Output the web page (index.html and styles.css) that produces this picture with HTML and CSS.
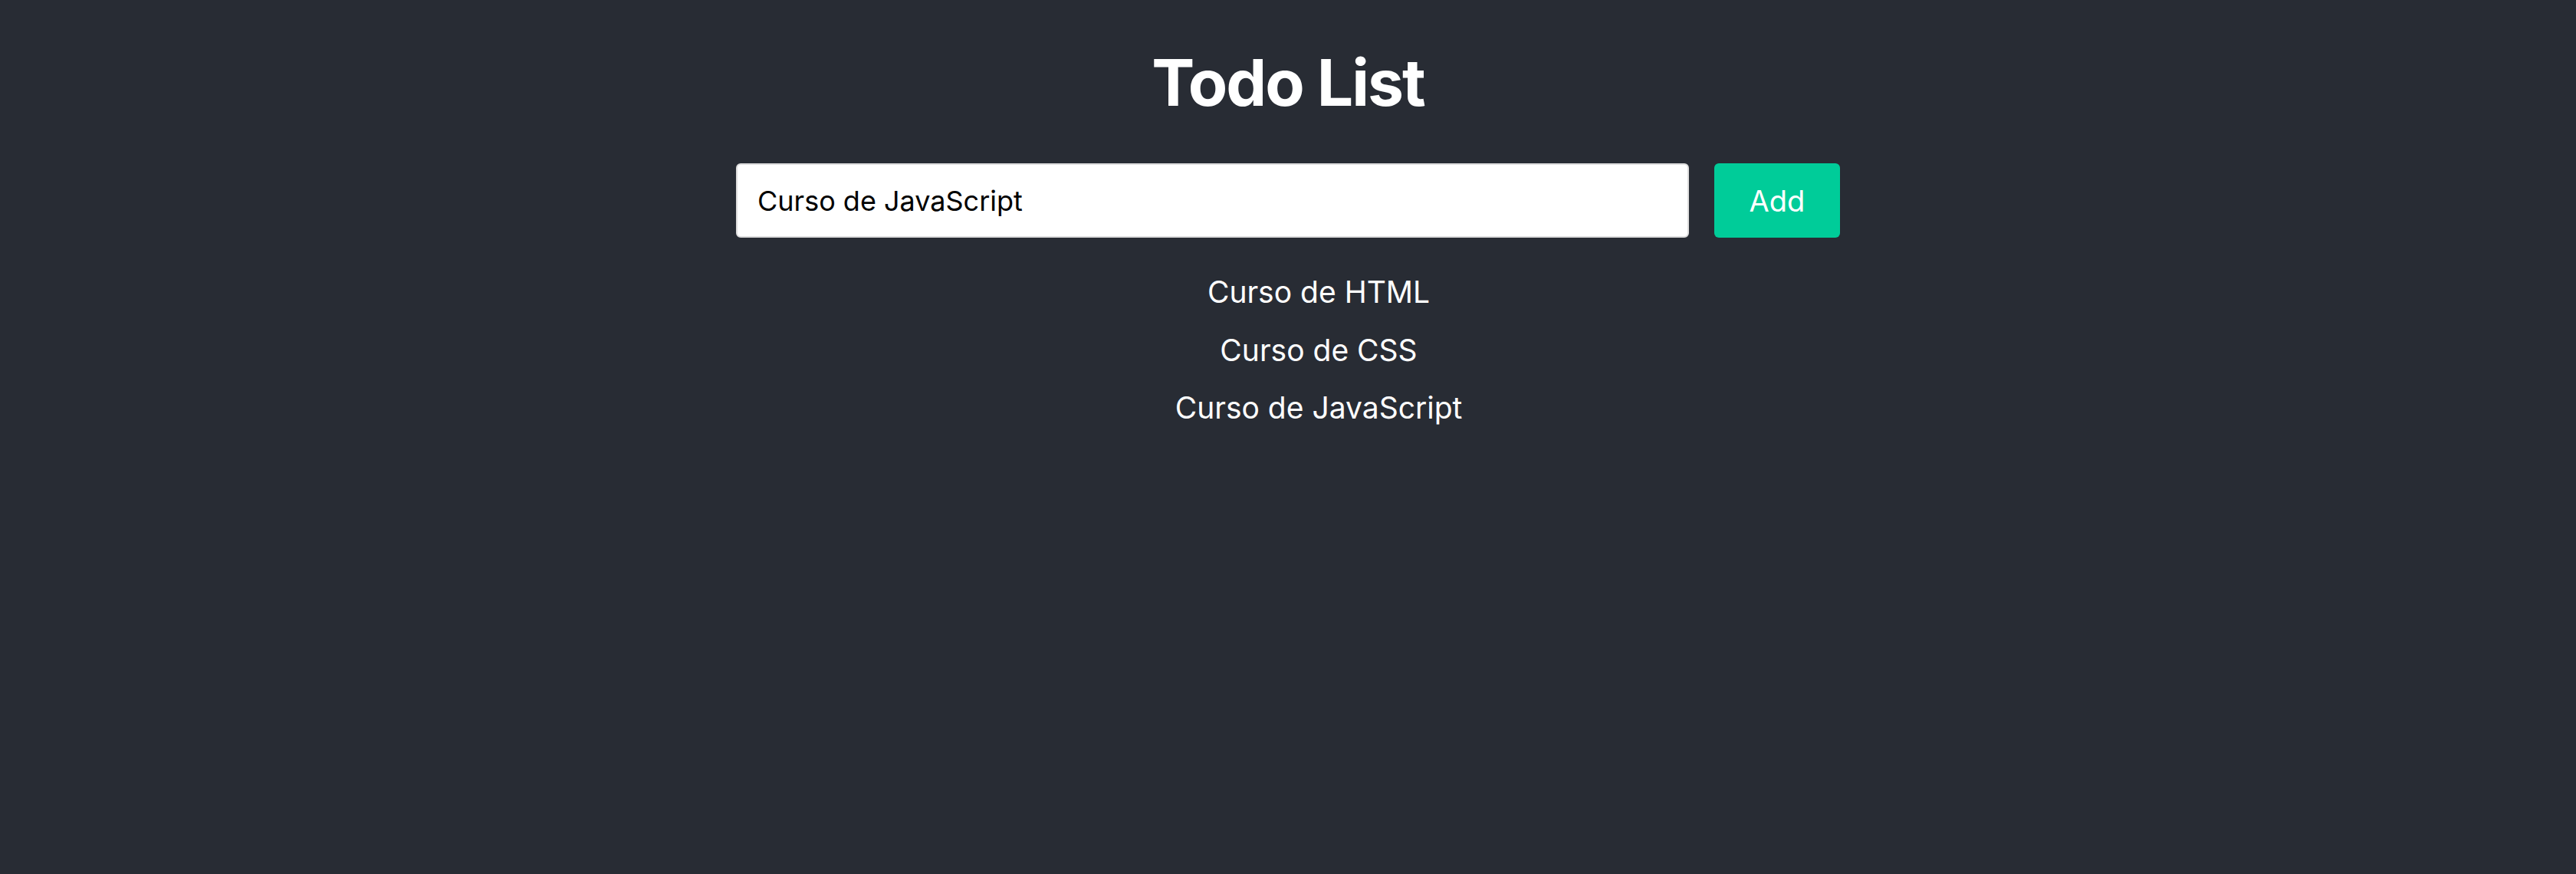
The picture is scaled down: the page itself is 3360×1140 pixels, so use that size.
FILE: index.html
```html
<!DOCTYPE html>
<html lang="pt-br">
  <head>
    <meta charset="utf-8">
    <meta name="viewport" content="width=device-width">
    <title>Todo List</title>
    <link rel="stylesheet" href="styles.css">
  </head>
  <body>
    <div class="app">
      <h1 class="title">Todo List</h1>
      <form class="todo-form">
        <input class="todo-input" type="text" value="Curso de JavaScript">
        <button class="todo-add" type="button">Add</button>
      </form>
      <ul class="todo-list">
        <li class="todo-item">Curso de HTML</li>
        <li class="todo-item">Curso de CSS</li>
        <li class="todo-item">Curso de JavaScript</li>
      </ul>
    </div>
  </body>
</html>
```

FILE: styles.css
```css
body {
    margin: 0;
    min-height: 1140px;
    background: #282c34;
    color: #fff;
    font-family: Inter, "Noto Sans", sans-serif;
}
.app {
    display: flex;
    flex-direction: column;
    align-items: center;
    padding-top: 57px;
}
.title {
    margin: 0;
    font-size: 84px;
    font-weight: 700;
    line-height: 102px;
    letter-spacing: -2px;
}
.todo-form {
    display: flex;
    gap: 33px;
    margin-top: 54px;
}
.todo-input {
    box-sizing: border-box;
    width: 1243px;
    height: 97px;
    padding: 0 26px;
    border: 2px solid #ddd;
    border-radius: 6px;
    background: #fff;
    color: #000;
    font-family: Inter, "Noto Sans", sans-serif;
    font-size: 36px;
    outline: none;
}
.todo-add {
    width: 164px;
    height: 97px;
    border: none;
    border-radius: 6px;
    background: #00cc99;
    color: #fff;
    font-family: Inter, "Noto Sans", sans-serif;
    font-size: 38px;
}
.todo-list {
    list-style: none;
    margin: 33px 0 0;
    padding: 0 0 0 80px;
    text-align: center;
}
.todo-item {
    font-size: 39px;
    line-height: 75.5px;
}
```
